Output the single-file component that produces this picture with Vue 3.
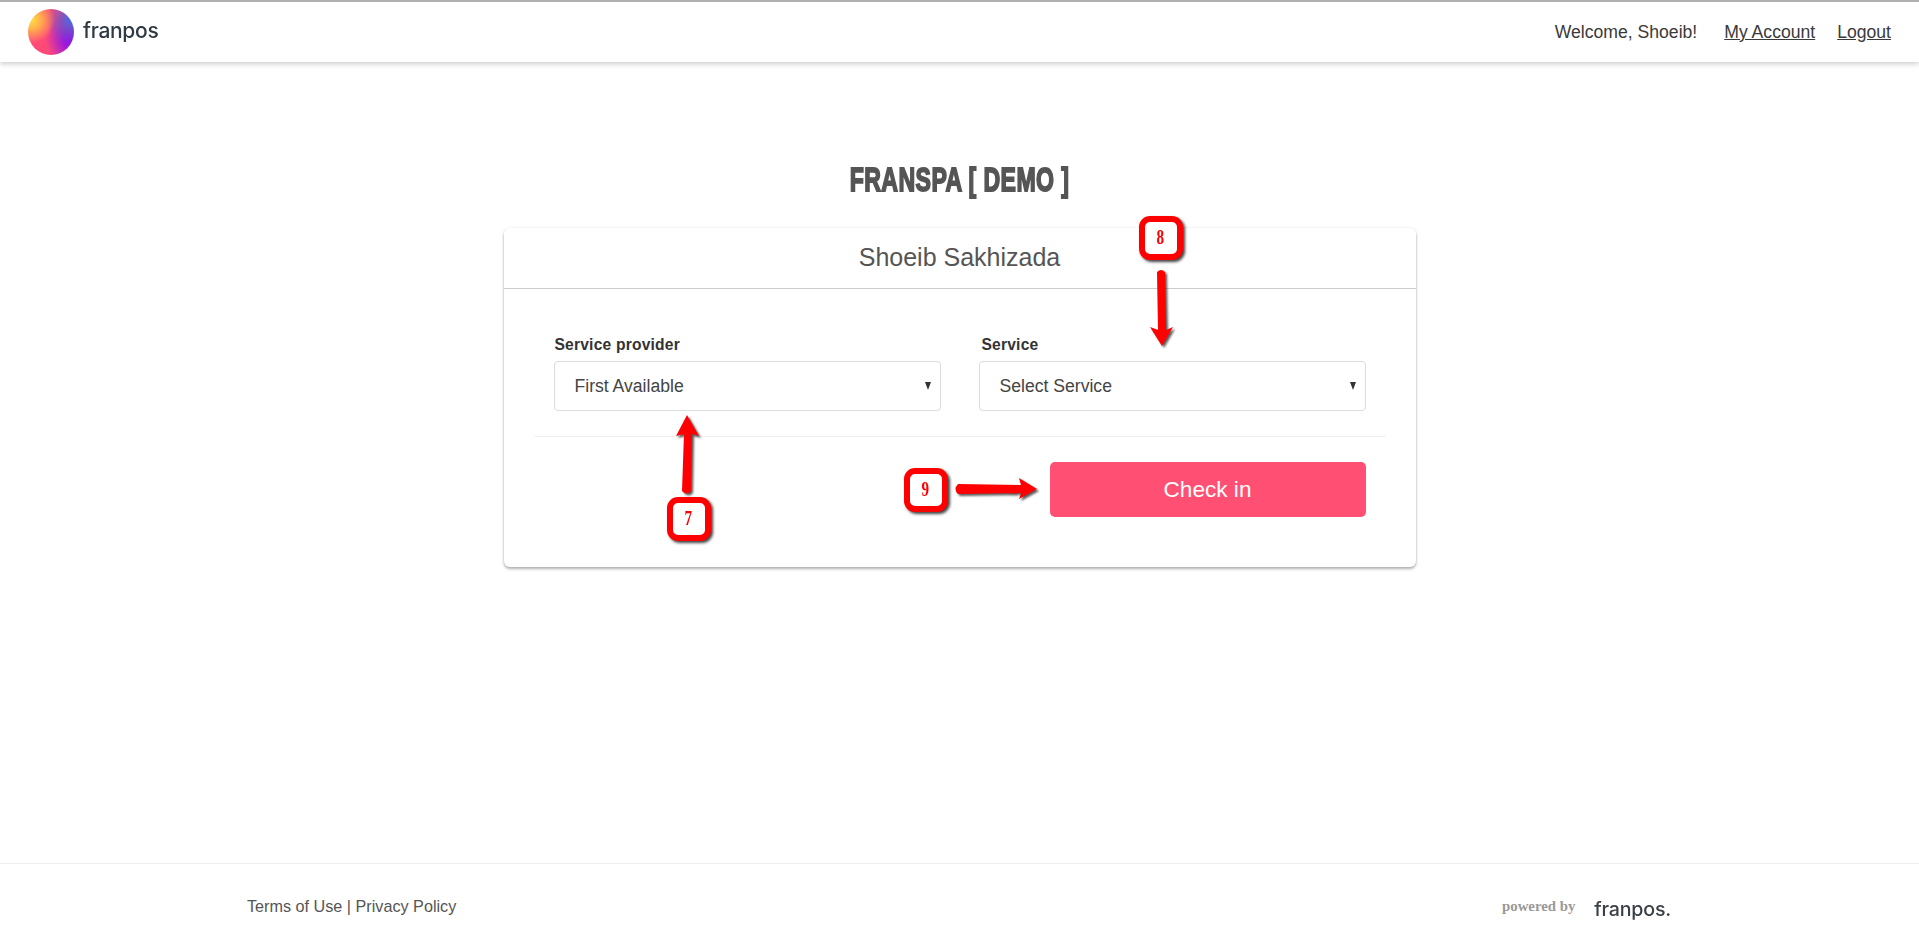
<script setup>
import { ref } from 'vue'

const provider = ref('First Available')
const service = ref('Select Service')
const providers = ['First Available']
const services = ['Select Service']

// numbered callouts over the card
const badges = [
  { n: 8, cls: 'b8' },
  { n: 7, cls: 'b7' },
  { n: 9, cls: 'b9' }
]
</script>

<template>
  <div class="page">
    <header class="topbar">
      <div class="brand">
        <span class="orb"></span>
        <span class="brand-name">franpos</span>
      </div>
      <nav class="nav">
        <span class="welcome">Welcome, Shoeib!</span>
        <a href="#">My Account</a>
        <a href="#">Logout</a>
      </nav>
    </header>

    <main class="main">
      <h1 class="title">FRANSPA [ DEMO ]</h1>

      <div class="card">
        <div class="card-head">Shoeib Sakhizada</div>
        <div class="card-body">
          <div class="fields">
            <div class="field">
              <label>Service provider</label>
              <div class="select-wrap">
                <select v-model="provider">
                  <option v-for="p in providers" :key="p">{{ p }}</option>
                </select>
              </div>
            </div>
            <div class="field second">
              <label>Service</label>
              <div class="select-wrap">
                <select v-model="service">
                  <option v-for="s in services" :key="s">{{ s }}</option>
                </select>
              </div>
            </div>
          </div>
          <div class="actions">
            <button class="checkin">Check in</button>
          </div>
        </div>

        <!-- callouts -->
        <svg class="arrows" width="912" height="339" viewBox="0 0 912 339">
          <path d="M653 44 Q657 40 661 44 L662 102 L669 99 L658 118 L646 99 L654 102 Z" />
          <path d="M178 263 Q183 268 187 263 L188 206 L195 208 L183 187 L172 208 L180 206 Z" />
          <path d="M454 256 L517 257 L515 250 L533 261 L515 271 L517 265 L454 266 Q449 261 454 256 Z" />
        </svg>
        <div v-for="b in badges" :key="b.n" class="badge" :class="b.cls"><span>{{ b.n }}</span></div>
      </div>
    </main>

    <footer class="footer">
      <div class="legal">Terms of Use | Privacy Policy</div>
      <div class="powered">
        <span class="by">powered by</span>
        <span class="mark">franpos.</span>
      </div>
    </footer>
  </div>
</template>

<style>
html, body {
  margin: 0;
  background: #fff;
}
</style>

<style scoped>
.page {
  display: flex;
  flex-direction: column;
  height: 947px;
  font-family: "Liberation Sans", Arial, sans-serif;
  color: #333;
  overflow: hidden;
}

.topbar {
  display: flex;
  justify-content: space-between;
  align-items: center;
  height: 60px;
  padding: 0 28px;
  border-top: 2px solid #b0b0b0;
  background: #fff;
  box-shadow: 0 2px 5px rgba(0, 0, 0, 0.2);
}

.brand {
  display: flex;
  align-items: center;
  gap: 9px;
}

.orb {
  width: 46px;
  height: 46px;
  border-radius: 50%;
  background:
    radial-gradient(circle at 8% 24%, #ffdc45 0, rgba(255, 190, 70, 0.9) 16%, rgba(255, 130, 90, 0) 42%),
    radial-gradient(circle at 96% 22%, #3a72f2 0, rgba(100, 90, 200, 0.75) 18%, rgba(170, 90, 130, 0) 46%),
    radial-gradient(circle at 100% 66%, #8a08f5 0, rgba(150, 20, 225, 0.9) 20%, rgba(220, 50, 160, 0) 52%),
    #ff4a78;
}

.brand-name {
  font-family: Inter, "Noto Sans", sans-serif;
  font-weight: 500;
  font-size: 21px;
  letter-spacing: -0.3px;
  color: #2f3a42;
  line-height: 1;
  margin-top: -3px;
  filter: blur(0.3px);
}

.nav {
  display: flex;
  align-items: center;
  gap: 22px;
  font-size: 17.6px;
}

.nav a {
  color: #3a3a3a;
}

.welcome {
  margin-right: 5px;
  color: #3a3a3a;
}

.main {
  flex: 1;
  display: flex;
  flex-direction: column;
  align-items: center;
}

.title {
  margin: 99px 0 31px;
  font-family: "Liberation Sans", sans-serif;
  font-size: 34px;
  line-height: 36px;
  font-weight: 700;
  color: #555;
  -webkit-text-stroke: 1.8px #555;
  letter-spacing: 0.6px;
  white-space: nowrap;
  transform: scaleX(0.68);
}

.card {
  position: relative;
  width: 912px;
  height: 339px;
  background: #fff;
  border-radius: 6px;
  box-shadow: 0 2px 3px rgba(0, 0, 0, 0.3), 0 0 3px rgba(0, 0, 0, 0.08);
}

.card-head {
  height: 60px;
  line-height: 59px;
  text-align: center;
  font-size: 25px;
  color: #555;
  border-bottom: 1px solid #ccc;
}

.card-body {
  padding: 0 31px;
}

.fields {
  display: flex;
  gap: 38px;
  padding: 47px 19px 25px;
  border-bottom: 1px solid #eee;
}

.field {
  flex: 1;
}

.field label {
  display: block;
  margin: 0 0 7px 1px;
  font-size: 15.6px;
  line-height: 18px;
  font-weight: 700;
  color: #333;
  letter-spacing: 0.2px;
}

.field.second label {
  margin-left: 3px;
}

.select-wrap {
  position: relative;
}

.select-wrap::after {
  content: "";
  position: absolute;
  right: 10px;
  top: 21px;
  border-left: 3.5px solid transparent;
  border-right: 3.5px solid transparent;
  border-top: 8px solid #333;
  pointer-events: none;
}

select {
  display: block;
  width: 100%;
  height: 50px;
  padding: 0 20px;
  appearance: none;
  background: #fff;
  border: 1px solid #ddd;
  border-radius: 4px;
  font-family: inherit;
  font-size: 17.6px;
  color: #444;
}

.actions {
  display: flex;
  justify-content: flex-end;
  padding: 25px 19px 0;
}

.checkin {
  width: 316px;
  height: 55px;
  border: none;
  border-radius: 5px;
  background: #ff5073;
  color: #fff;
  font-family: inherit;
  font-size: 22.6px;
  cursor: pointer;
}

.arrows {
  position: absolute;
  left: 0;
  top: 0;
  overflow: visible;
  pointer-events: none;
  filter: drop-shadow(2px 2px 1px rgba(0, 0, 0, 0.65));
}

.arrows path {
  fill: #f00;
}

.badge {
  position: absolute;
  box-sizing: border-box;
  width: 44px;
  height: 44px;
  border: 6px solid #f00;
  border-radius: 11px;
  background: #fff;
  box-shadow: 2px 2px 3px rgba(0, 0, 0, 0.75);
  color: #f00;
  font-family: "Liberation Serif", serif;
  font-weight: 700;
  font-size: 21px;
  line-height: 30px;
  text-align: center;
}

.badge span {
  display: inline-block;
  transform: scaleX(0.72);
}

.b8 {
  left: 635px;
  top: -12px;
}

.b7 {
  left: 163px;
  top: 269px;
}

.b9 {
  left: 400px;
  top: 240px;
}

.footer {
  display: flex;
  justify-content: space-between;
  align-items: center;
  box-sizing: border-box;
  height: 84px;
  padding: 2px 248px 0 247px;
  border-top: 1px solid #eee;
}

.legal {
  font-size: 16.2px;
  color: #555;
}

.powered {
  display: flex;
  align-items: center;
  gap: 19px;
}

.by {
  font-family: "Liberation Serif", serif;
  font-weight: 700;
  font-size: 14.8px;
  color: #999;
}

.mark {
  font-family: Inter, "Noto Sans", sans-serif;
  font-weight: 500;
  font-size: 19.6px;
  letter-spacing: -0.2px;
  color: #3a4046;
  margin-top: 4px;
  filter: blur(0.3px);
}
</style>
